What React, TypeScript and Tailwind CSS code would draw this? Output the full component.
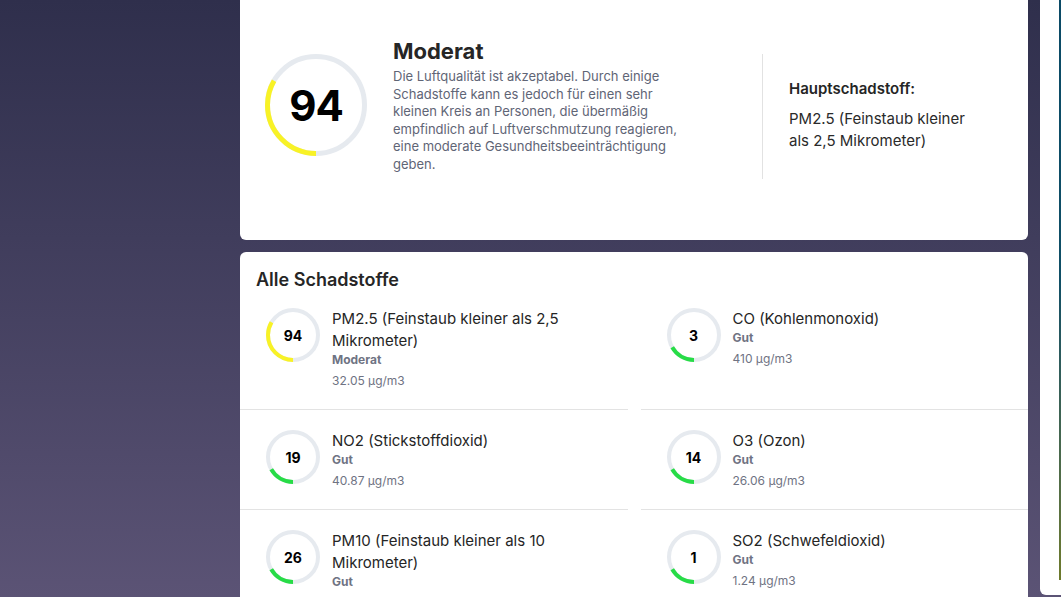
import React from "react";

type Pollutant = {
  value: number;
  name: string;
  status: string;
  level: number;
  amount: string;
};

const pollutants: Pollutant[] = [
  { value: 94, name: "PM2.5 (Feinstaub kleiner als 2,5 Mikrometer)", status: "Moderat", level: 2, amount: "32.05 µg/m3" },
  { value: 3, name: "CO (Kohlenmonoxid)", status: "Gut", level: 1, amount: "410 µg/m3" },
  { value: 19, name: "NO2 (Stickstoffdioxid)", status: "Gut", level: 1, amount: "40.87 µg/m3" },
  { value: 14, name: "O3 (Ozon)", status: "Gut", level: 1, amount: "26.06 µg/m3" },
  { value: 26, name: "PM10 (Feinstaub kleiner als 10 Mikrometer)", status: "Gut", level: 1, amount: "38.64 µg/m3" },
  { value: 1, name: "SO2 (Schwefeldioxid)", status: "Gut", level: 1, amount: "1.24 µg/m3" },
];

const levelColor = (level: number) => (level >= 2 ? "#f8f226" : "#27dc47");

// ring that starts at 6 o'clock and fills clockwise, one sixth per level
const Gauge = ({ size, stroke, level }: { size: number; stroke: number; level: number }) => {
  const r = (size - stroke) / 2;
  const c = 2 * Math.PI * r;
  const arc = (c * level) / 6;
  return (
    <svg width={size} height={size} className="absolute inset-0">
      <circle cx={size / 2} cy={size / 2} r={r} fill="none" stroke="#e6eaef" strokeWidth={stroke} />
      <circle
        cx={size / 2}
        cy={size / 2}
        r={r}
        fill="none"
        stroke={levelColor(level)}
        strokeWidth={stroke}
        strokeDasharray={`${arc} ${c}`}
        transform={`rotate(90 ${size / 2} ${size / 2})`}
      />
    </svg>
  );
};

const PollutantRow = ({ p }: { p: Pollutant }) => (
  <div className="flex items-start gap-3 border-b border-[#e3e3e3] pt-5 pb-5 pl-[26px] pr-4">
    <div className="relative w-[54px] h-[54px] shrink-0 flex items-center justify-center">
      <Gauge size={54} stroke={4} level={p.level} />
      <span className="relative text-[14px] font-bold text-black">{p.value}</span>
    </div>
    <div className="flex flex-col w-[250px]">
      <span className="text-[15px] leading-[22px] text-[#252525]">{p.name}</span>
      <span className="text-[12px] leading-[16px] font-bold text-[#6f7383]">{p.status}</span>
      <span className="text-[12px] leading-[16px] mt-[5px] text-[#6f7383]">{p.amount}</span>
    </div>
  </div>
);

export default function App() {
  return (
    <div className="h-[597px] w-full overflow-hidden bg-linear-to-b from-[#2f2f4c] to-[#5b5375] font-['Inter','Noto_Sans',sans-serif]">
      <div className="flex gap-3 pl-[240px] -mt-[20px]">
        <div className="flex flex-col gap-3 w-[788px] shrink-0">
          {/* Summary */}
          <div className="bg-white rounded-md h-[260px] pt-[57px] pl-[25px] flex items-start">
            <div className="relative w-[102px] h-[102px] mt-[17px] shrink-0 flex items-center justify-center">
              <Gauge size={102} stroke={5} level={2} />
              <span className="relative text-[42px] font-bold text-black tracking-tight">94</span>
            </div>
            <div className="ml-[26px] w-[306px] shrink-0">
              <h2 className="text-[22px] leading-[28px] font-bold text-[#262626]">Moderat</h2>
              <p className="mt-[3px] text-[13px] leading-[17.5px] text-[#5f6576]">
                Die Luftqualität ist akzeptabel. Durch einige Schadstoffe kann es jedoch für einen sehr
                kleinen Kreis an Personen, die übermäßig empfindlich auf Luftverschmutzung reagieren,
                eine moderate Gesundheitsbeeinträchtigung geben.
              </p>
            </div>
            <div className="ml-[63px] mt-[17px] h-[125px] w-px bg-[#e2e2e2] shrink-0" />
            <div className="ml-[26px] mt-[42px] w-[185px]">
              <div className="text-[15px] leading-[20px] font-semibold text-[#252525]">Hauptschadstoff:</div>
              <div className="mt-[9px] text-[15px] leading-[22px] text-[#2a2a2a]">
                PM2.5 (Feinstaub kleiner als 2,5 Mikrometer)
              </div>
            </div>
          </div>

          {/* All pollutants */}
          <div className="bg-white rounded-md pt-4 h-[400px]">
            <h3 className="px-4 -mb-1 text-[18px] leading-[24px] font-semibold text-[#262626]">Alle Schadstoffe</h3>
            <div className="grid grid-cols-2 gap-x-[13px]">
              {pollutants.map((p) => (
                <PollutantRow key={p.name} p={p} />
              ))}
            </div>
          </div>
        </div>

        {/* Side card, mostly off screen */}
        <div className="bg-white rounded-md w-[260px] h-[615px] shrink-0 pl-[19px] pb-[15px]">
          <div className="h-full w-full bg-linear-to-b from-[#0a4a66] via-[#0f4f66] to-[#6d7a2a]" />
        </div>
      </div>
    </div>
  );
}
